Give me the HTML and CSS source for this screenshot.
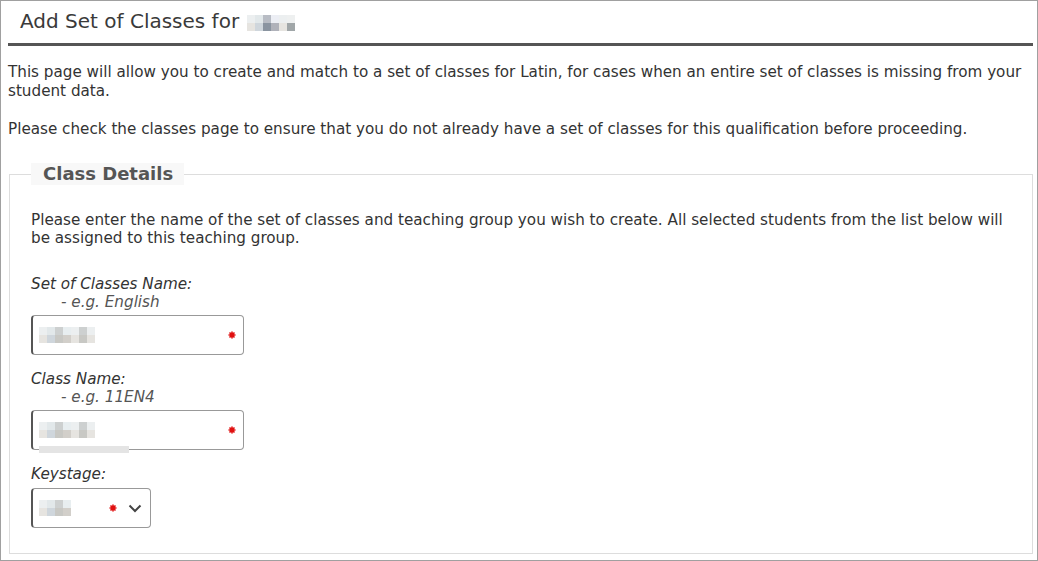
FILE: index.html
```html
<!DOCTYPE html>
<html lang="en">
<head>
    <meta charset="UTF-8">
    <title>Add Set of Classes</title>
    <link rel="stylesheet" href="styles.css">
</head>
<body>
    <div class="page">
        <h1 class="page-title">Add Set of Classes for <span class="blur blur-title"><i></i><i></i><i></i><i></i><i></i><i></i></span></h1>
        <hr class="title-rule">

        <p class="intro">This page will allow you to create and match to a set of classes for Latin, for cases when an entire set of classes is missing from your student data.</p>
        <p class="intro">Please check the classes page to ensure that you do not already have a set of classes for this qualification before proceeding.</p>

        <fieldset class="details">
            <legend>Class Details</legend>
            <p class="details-text">Please enter the name of the set of classes and teaching group you wish to create. All selected students from the list below will be assigned to this teaching group.</p>

            <div class="field">
                <label>Set of Classes Name:</label>
                <span class="hint">- e.g. English</span>
                <div class="input wide">
                    <span class="blur"><i></i><i></i><i></i><i></i><i></i><i></i><i></i></span>
                    <svg class="req" width="8" height="8" viewBox="0 0 8 8"><path d="M4 0.5 V7.5 M0.5 4 H7.5 M1.5 1.5 L6.5 6.5 M6.5 1.5 L1.5 6.5" stroke="#e01010" stroke-width="1.6"/></svg>
                </div>
            </div>

            <div class="field">
                <label>Class Name:</label>
                <span class="hint">- e.g. 11EN4</span>
                <div class="input wide">
                    <span class="blur"><i></i><i></i><i></i><i></i><i></i><i></i><i></i></span>
                    <svg class="req" width="8" height="8" viewBox="0 0 8 8"><path d="M4 0.5 V7.5 M0.5 4 H7.5 M1.5 1.5 L6.5 6.5 M6.5 1.5 L1.5 6.5" stroke="#e01010" stroke-width="1.6"/></svg>
                    <span class="underbar"></span>
                </div>
            </div>

            <div class="field">
                <label>Keystage:</label>
                <div class="input narrow">
                    <span class="blur"><i></i><i></i><i></i><i></i></span>
                    <svg class="req" width="8" height="8" viewBox="0 0 8 8"><path d="M4 0.5 V7.5 M0.5 4 H7.5 M1.5 1.5 L6.5 6.5 M6.5 1.5 L1.5 6.5" stroke="#e01010" stroke-width="1.6"/></svg>
                    <svg class="chevron" width="14" height="9" viewBox="0 0 14 9"><path d="M1.5 1.5 L7 7 L12.5 1.5" fill="none" stroke="#444" stroke-width="2"/></svg>
                </div>
            </div>
        </fieldset>
    </div>
</body>
</html>
```

FILE: styles.css
```css
html, body {
    margin: 0;
    padding: 0;
    background: #fff;
}
body {
    font-family: "DejaVu Sans", Verdana, sans-serif;
    font-size: 15.2px;
    color: #333;
}
.page {
    box-sizing: border-box;
    width: 1038px;
    height: 561px;
    border: 1px solid #a0a0a0;
    padding: 0 4px 0 7px;
    overflow: hidden;
}
.page-title {
    font-size: 20px;
    font-weight: normal;
    color: #3a3a3a;
    margin: 0;
    padding: 7px 0 0 12px;
    height: 42px;
    box-sizing: border-box;
    line-height: 26px;
}
.title-rule {
    border: none;
    height: 3px;
    background: #555;
    margin: 0;
}
.intro {
    margin: 17px 0 19px 0;
    line-height: 19px;
}
.intro + .intro {
    margin-top: 0;
}
.details {
    margin: 24px 0 0 1px;
    border: 1px solid #ddd;
    padding: 0 20px 10px 21px;
}
.details legend {
    font-size: 18px;
    font-weight: bold;
    color: #555;
    background: #f8f8f8;
    padding: 0 11px 0 12px;
    line-height: 22px;
}
.details-text {
    margin: 26px 0 28px 0;
    line-height: 18px;
}
.field {
    display: flex;
    flex-direction: column;
    align-items: flex-start;
    margin-bottom: 15px;
}
.field label {
    font-style: italic;
    line-height: 18px;
}
.hint {
    font-style: italic;
    color: #555;
    padding-left: 30px;
    line-height: 18px;
}
.input {
    box-sizing: border-box;
    height: 40px;
    border: 1px solid #999;
    border-left: 2px solid #555;
    border-radius: 4px;
    display: flex;
    align-items: center;
    padding: 0 0 0 6px;
    position: relative;
    margin-top: 4px;
}
.field label + .input {
    margin-top: 5px;
}
.wide {
    width: 213px;
}
.narrow {
    width: 120px;
}
.blur {
    display: inline-flex;
}
.blur i {
    display: block;
    width: 8px;
    height: 16px;
    background: linear-gradient(#eceff0 50%, #e6e4e0 50%);
}
.blur i:nth-child(2n) {
    background: linear-gradient(#e2e8ea 50%, #cfd6dc 50%);
}
.blur i:nth-child(3n) {
    background: linear-gradient(#cdd0d0 50%, #c8c8c4 50%);
}
.blur i:nth-child(4n) {
    background: linear-gradient(#e8eef0 50%, #d2cfca 50%);
}
.blur-title {
    vertical-align: -3px;
    margin-left: 2px;
}
.blur-title i:nth-child(3) {
    background: linear-gradient(#b8bcc4 50%, #8a94a0 50%);
}
.blur-title i:nth-child(4) {
    background: linear-gradient(#eceef4 50%, #b0b2ba 50%);
}
.blur-title i:nth-child(6) {
    background: linear-gradient(#eef0f0 50%, #a0a6a8 50%);
}
.req {
    position: absolute;
    right: 7px;
    top: 15px;
}
.narrow .req {
    right: 33px;
}
.chevron {
    position: absolute;
    right: 8px;
    top: 15px;
}
.underbar {
    position: absolute;
    left: 6px;
    top: 35px;
    width: 90px;
    height: 7px;
    background: #e4e4e4;
}
```
